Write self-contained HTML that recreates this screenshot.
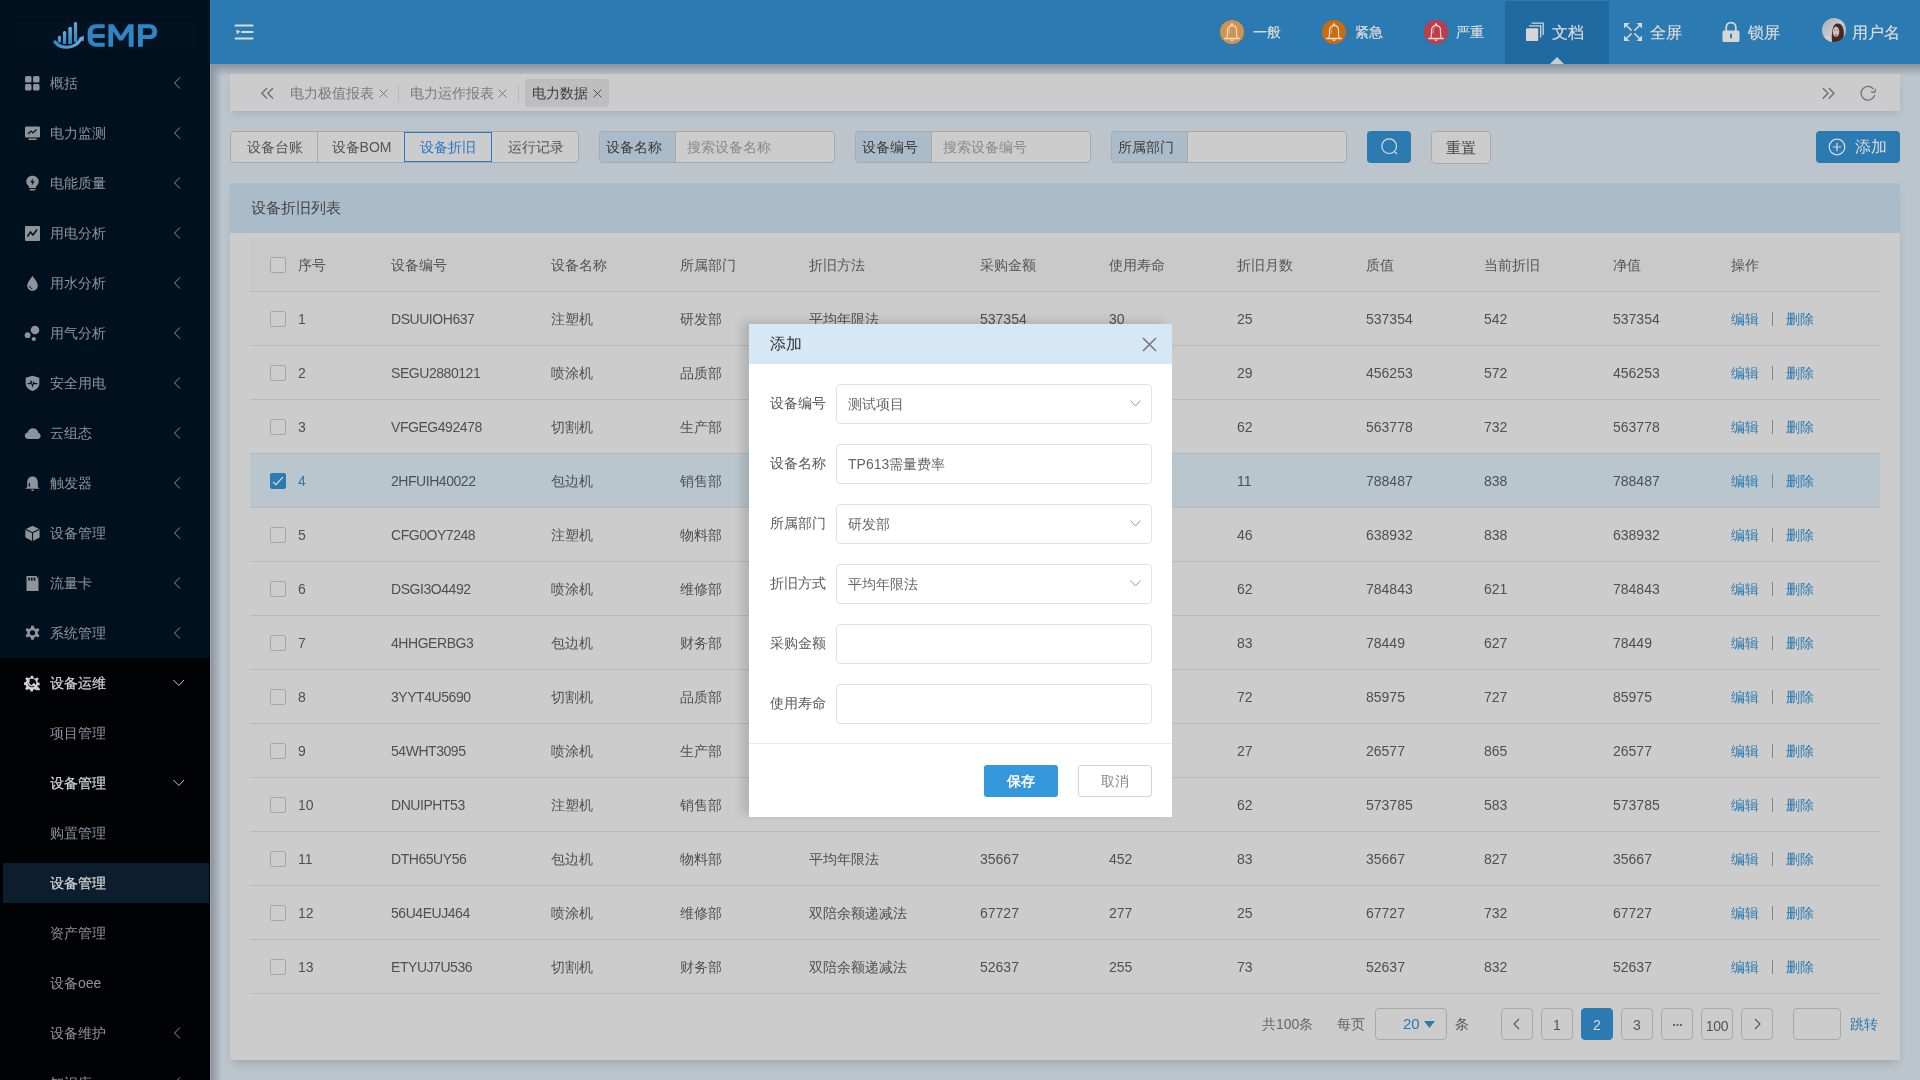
<!DOCTYPE html>
<html><head><meta charset="utf-8"><style>
*{box-sizing:border-box;margin:0;padding:0}
html,body{width:1920px;height:1080px;overflow:hidden}
#root{position:absolute;left:0;top:0;width:1920px;height:1080px;will-change:transform}
body{font-family:"Liberation Sans",sans-serif;font-size:14px;background:#bcc4cc;position:relative;color:#505050}
.a{position:absolute}
#side{position:absolute;left:0;top:0;width:210px;height:1080px;background:#01101f;overflow:hidden}
#side .sub{position:absolute;left:0;top:658px;width:210px;height:422px;background:#010204}
.mi{position:absolute;left:0;width:210px;height:50px;line-height:50px;color:#8f949a;font-size:14px;white-space:nowrap}
.mi .t{position:absolute;left:50px;top:0}
.mi svg.ic{position:absolute;left:24px;top:17px}
.mi svg.ch{position:absolute;left:172px;top:19px}
.mi.w{color:#d2d2d2;-webkit-text-stroke:0.25px #d2d2d2}
#hdr{position:absolute;left:210px;top:0;width:1710px;height:64px;background:#2b7ab2}
#hdrsh{position:absolute;left:210px;top:64px;width:1710px;height:12px;background:linear-gradient(#8a939c,rgba(188,196,204,0))}
#sidesh{position:absolute;left:210px;top:64px;width:14px;height:1016px;background:linear-gradient(90deg,#a4acb4 0,#8e97a0 1.5px,rgba(188,196,204,0) 12px)}
.ht{position:absolute;top:0;height:64px;line-height:66px;color:#dcdcdc;font-size:16px;white-space:nowrap;-webkit-text-stroke:0.2px #dcdcdc}
#tabs{position:absolute;left:230px;top:74px;width:1670px;height:37px;background:#cccccc;box-shadow:0 4px 7px -2px rgba(60,70,85,.18)}
.tb{position:absolute;top:0;height:37px;line-height:39px;color:#7a7a7a;font-size:14px;white-space:nowrap}
.grp{position:absolute;top:131px;height:32px;border:1px solid #a9a9a9;background:#cccccc;border-radius:4px;overflow:hidden}
.gb{position:absolute;top:0;height:30px;line-height:30px;text-align:center;color:#555;font-size:14px;white-space:nowrap}
#panel{position:absolute;left:230px;top:183px;width:1670px;height:877px;background:#cccccc;box-shadow:0 6px 9px -4px rgba(60,70,80,.28);border-radius:2px}
#ph{position:absolute;left:0;top:0;width:1670px;height:50px;background:#aabbc9;line-height:50px;padding-left:21px;font-size:15px;color:#444}
.row{position:absolute;left:250px;width:1630px;height:54px;border-bottom:1px solid #b9b9b9}
.c{position:absolute;top:1px;line-height:53px;color:#505050;white-space:nowrap}
.cb{position:absolute;left:20px;top:19px;width:16px;height:16px;border:1px solid #a6a6a6;border-radius:2px}
.lk{color:#2b7ab2}
.pg{position:absolute;top:1008px;width:32px;height:32px;border:1px solid #a8a8a8;border-radius:4px;text-align:center;line-height:32px;color:#555;font-size:14px}
#modal{position:absolute;left:749px;top:324px;width:423px;height:493px;background:#fff;box-shadow:-7px -3px 9px rgba(0,0,0,.13)}
#mh{position:absolute;left:0;top:0;width:423px;height:40px;background:#d6e8f6;line-height:40px;padding-left:21px;font-size:16px;color:#333}
.fl{position:absolute;left:21px;margin-top:-1px;line-height:40px;color:#5a5a5a;font-size:14px;white-space:nowrap}
.fi{position:absolute;left:87px;width:316px;height:40px;border:1px solid #e3e3e3;border-radius:4px;line-height:38px;padding-left:11px;color:#666;font-size:14px}
.fi svg{position:absolute;left:293px;top:15px}
</style></head><body><div id="root">
<div id="side"><div class="sub"></div><div class="a" style="left:16px;top:21px;width:179px;height:29px;background:#021221"></div>
<svg class="a" style="left:50px;top:18px" width="112" height="34" viewBox="0 0 112 34">
<defs><linearGradient id="lg" x1="0" y1="0" x2="0" y2="1"><stop offset="0" stop-color="#6ea8d4"/><stop offset="1" stop-color="#2f86c4"/></linearGradient>
<linearGradient id="lg2" x1="0" y1="0" x2="1" y2="0"><stop offset="0" stop-color="#3a8bc9"/><stop offset="1" stop-color="#6ea8d4"/></linearGradient></defs>
<path d="M7.9 18.8 Q9.4 16.8 10.9 18.8 V24.5 H7.9Z" fill="url(#lg)"/>
<path d="M12.9 14.1 Q14.55 12.1 16.2 14.1 V26 H12.9Z" fill="url(#lg)"/>
<path d="M18.3 9.8 Q20.1 7.8 21.9 9.8 V26 H18.3Z" fill="url(#lg)"/>
<path d="M23.9 5 Q25.5 3 27.1 5 V24 H23.9Z" fill="url(#lg)"/>
<path d="M5 24 C10 30.5 24 32.5 31 21" fill="none" stroke="url(#lg2)" stroke-width="3.2" stroke-linecap="round"/>
<path d="M28.5 20.2 L34 17.6 L33.6 23.5Z" fill="#6ea8d4"/>
<g fill="#2f86c4" fill-rule="evenodd">
<path d="M54.7 6.3 H46 C41.2 6.3 37.66 9.8 37.66 14.5 V20.5 C37.66 25.2 41.2 28.66 46 28.66 H54.7 V24.8 H46.5 C44.2 24.8 42.7 23.3 42.7 21 V19.9 H54.7 V16 H42.7 V14 C42.7 11.7 44.2 10.2 46.5 10.2 H54.7Z"/>
<path d="M58.4 28.66 V6.3 H63.5 L70.9 17.8 L78.3 6.3 H83.6 V28.66 H78.7 V13.8 L72.6 22.4 H69.2 L63.1 13.8 V28.66Z"/>
<path d="M88 28.66 V6.3 H100 C104.3 6.3 107.2 9.3 107.2 13.7 C107.2 18.1 104.3 21.1 100 21.1 H92.9 V28.66Z M92.9 10.2 V17 H99.5 C101.3 17 102.4 15.6 102.4 13.6 C102.4 11.6 101.3 10.2 99.5 10.2Z"/>
</g></svg>
<div class="mi" style="top:58px"><svg class="ic" width="17" height="17" viewBox="0 0 17 17" fill="#8f949a"><rect x="1" y="1" width="6.5" height="6.5" rx="1.5"/><rect x="9" y="1" width="6.5" height="6.5" rx="1.5"/><rect x="1" y="9" width="6.5" height="6.5" rx="1.5"/><rect x="9" y="9" width="6.5" height="6.5" rx="1.5"/></svg><span class="t">概括</span><svg class="ch" width="10" height="12" viewBox="0 0 10 12"><path d="M8 .5 L2.5 6 L8 11.5" fill="none" stroke="#8f949a" stroke-width="1"/></svg></div>
<div class="mi" style="top:108px"><svg class="ic" width="17" height="17" viewBox="0 0 17 17" fill="#8f949a"><rect x="1" y="1.5" width="15" height="11" rx="1"/><rect x="4.5" y="13.5" width="8" height="1.5"/><path d="M4 9 L7 6 L9 8 L12.5 4.5" fill="none" stroke="#01101f" stroke-width="1.2"/></svg><span class="t">电力监测</span><svg class="ch" width="10" height="12" viewBox="0 0 10 12"><path d="M8 .5 L2.5 6 L8 11.5" fill="none" stroke="#8f949a" stroke-width="1"/></svg></div>
<div class="mi" style="top:158px"><svg class="ic" width="17" height="17" viewBox="0 0 17 17" fill="#8f949a"><path d="M8.5 0.8 C4.8 0.8 2.3 3.5 2.3 6.6 C2.3 9 3.8 10.5 5 11.6 L5 13 L12 13 L12 11.6 C13.2 10.5 14.7 9 14.7 6.6 C14.7 3.5 12.2 0.8 8.5 0.8Z"/><rect x="5.5" y="14" width="6" height="1.6" rx=".8"/><path d="M9.3 3 L6.2 7.4 L8.4 7.4 L7.6 10.8 L10.8 6.2 L8.6 6.2 Z" fill="#01101f"/></svg><span class="t">电能质量</span><svg class="ch" width="10" height="12" viewBox="0 0 10 12"><path d="M8 .5 L2.5 6 L8 11.5" fill="none" stroke="#8f949a" stroke-width="1"/></svg></div>
<div class="mi" style="top:208px"><svg class="ic" width="17" height="17" viewBox="0 0 17 17" fill="#8f949a"><rect x="1" y="1" width="15" height="15" rx="1"/><path d="M3.5 11.5 L6.5 7 L9 10 L13 4.5" fill="none" stroke="#01101f" stroke-width="1.5"/></svg><span class="t">用电分析</span><svg class="ch" width="10" height="12" viewBox="0 0 10 12"><path d="M8 .5 L2.5 6 L8 11.5" fill="none" stroke="#8f949a" stroke-width="1"/></svg></div>
<div class="mi" style="top:258px"><svg class="ic" width="17" height="17" viewBox="0 0 17 17" fill="#8f949a"><path d="M8.5 1 C6 4.5 3.2 7.5 3.2 10.5 C3.2 13.5 5.6 15.8 8.5 15.8 C11.4 15.8 13.8 13.5 13.8 10.5 C13.8 7.5 11 4.5 8.5 1Z"/><path d="M5.7 11 C5.8 12.6 6.8 13.6 8.3 13.8" fill="none" stroke="#01101f" stroke-width="1"/></svg><span class="t">用水分析</span><svg class="ch" width="10" height="12" viewBox="0 0 10 12"><path d="M8 .5 L2.5 6 L8 11.5" fill="none" stroke="#8f949a" stroke-width="1"/></svg></div>
<div class="mi" style="top:308px"><svg class="ic" width="17" height="17" viewBox="0 0 17 17" fill="#8f949a"><circle cx="11" cy="5" r="4.3"/><circle cx="3.6" cy="10.2" r="2.9"/><circle cx="9.8" cy="14" r="2.1"/></svg><span class="t">用气分析</span><svg class="ch" width="10" height="12" viewBox="0 0 10 12"><path d="M8 .5 L2.5 6 L8 11.5" fill="none" stroke="#8f949a" stroke-width="1"/></svg></div>
<div class="mi" style="top:358px"><svg class="ic" width="17" height="17" viewBox="0 0 17 17" fill="#8f949a"><path d="M8.5 0.8 L15.3 2.8 L15.3 8.5 C15.3 12 12.5 14.6 8.5 16 C4.5 14.6 1.7 12 1.7 8.5 L1.7 2.8 Z"/><path d="M3.5 8.6 L6 8.6 L7 6.3 L8.5 11 L9.8 7.3 L10.6 8.6 L13.5 8.6" fill="none" stroke="#01101f" stroke-width="1.1"/></svg><span class="t">安全用电</span><svg class="ch" width="10" height="12" viewBox="0 0 10 12"><path d="M8 .5 L2.5 6 L8 11.5" fill="none" stroke="#8f949a" stroke-width="1"/></svg></div>
<div class="mi" style="top:408px"><svg class="ic" width="17" height="17" viewBox="0 0 17 17" fill="#8f949a"><path d="M4.5 14 C2.3 14 0.8 12.6 0.8 10.8 C0.8 9.1 2 7.8 3.7 7.6 C4.2 5 6.3 3.2 9 3.2 C11.8 3.2 14 5.2 14.3 7.8 C15.8 8.2 16.6 9.4 16.6 10.9 C16.6 12.7 15.2 14 13.3 14Z"/></svg><span class="t">云组态</span><svg class="ch" width="10" height="12" viewBox="0 0 10 12"><path d="M8 .5 L2.5 6 L8 11.5" fill="none" stroke="#8f949a" stroke-width="1"/></svg></div>
<div class="mi" style="top:458px"><svg class="ic" width="17" height="17" viewBox="0 0 17 17" fill="#8f949a"><path d="M8.5 1.5 C5 1.5 3.2 4.2 3.2 7.5 L3.2 12 L1.3 13.8 L15.7 13.8 L13.8 12 L13.8 7.5 C13.8 4.2 12 1.5 8.5 1.5Z"/><rect x="7.2" y="14.4" width="2.6" height="1.6" rx=".8"/><rect x="4.8" y="8" width="1.2" height="3.6" fill="#01101f"/></svg><span class="t">触发器</span><svg class="ch" width="10" height="12" viewBox="0 0 10 12"><path d="M8 .5 L2.5 6 L8 11.5" fill="none" stroke="#8f949a" stroke-width="1"/></svg></div>
<div class="mi" style="top:508px"><svg class="ic" width="17" height="17" viewBox="0 0 17 17" fill="#8f949a"><path d="M8.5 0.8 L15.6 4.2 L15.6 12.6 L8.5 16.2 L1.4 12.6 L1.4 4.2 Z"/><path d="M1.8 4.4 L8.5 7.7 L15.2 4.4 M8.5 7.7 L8.5 16" fill="none" stroke="#01101f" stroke-width="1.1"/></svg><span class="t">设备管理</span><svg class="ch" width="10" height="12" viewBox="0 0 10 12"><path d="M8 .5 L2.5 6 L8 11.5" fill="none" stroke="#8f949a" stroke-width="1"/></svg></div>
<div class="mi" style="top:558px"><svg class="ic" width="17" height="17" viewBox="0 0 17 17" fill="#8f949a"><path d="M2.5 1 L14.5 1 L14.5 16 L2.5 16 Z"/><rect x="4.3" y="2.6" width="1.6" height="3" fill="#01101f"/><rect x="7" y="2.6" width="1.6" height="3" fill="#01101f"/><rect x="9.7" y="2.6" width="1.6" height="3" fill="#01101f"/><path d="M12.5 1 L14.5 1 L14.5 4.5 Z" fill="#01101f"/></svg><span class="t">流量卡</span><svg class="ch" width="10" height="12" viewBox="0 0 10 12"><path d="M8 .5 L2.5 6 L8 11.5" fill="none" stroke="#8f949a" stroke-width="1"/></svg></div>
<div class="mi" style="top:608px"><svg class="ic" width="17" height="17" viewBox="0 0 17 17" fill="#8f949a"><path d="M7.2 0.8 L9.8 0.8 L10.3 3 L12 3.9 L14.1 3 L15.5 5.2 L13.8 6.8 L13.8 8.7 L15.5 10.3 L14.1 12.5 L12 11.6 L10.3 12.5 L9.8 14.7 L7.2 14.7 L6.7 12.5 L5 11.6 L2.9 12.5 L1.5 10.3 L3.2 8.7 L3.2 6.8 L1.5 5.2 L2.9 3 L5 3.9 L6.7 3Z"/><circle cx="8.5" cy="7.75" r="2.6" fill="#01101f"/></svg><span class="t">系统管理</span><svg class="ch" width="10" height="12" viewBox="0 0 10 12"><path d="M8 .5 L2.5 6 L8 11.5" fill="none" stroke="#8f949a" stroke-width="1"/></svg></div>
<div class="mi w" style="top:658px"><svg class="ic" width="17" height="17" viewBox="0 0 17 17" fill="#d2d2d2"><g transform="translate(8 8)"><path d="M-1.3 -8 H1.3 L1.7 -5.6 L3.6 -4.8 L5.6 -6.3 L7.4 -4.5 L5.9 -2.5 L6.6 -0.6 L8.5 -0.2 V2.4 L6.3 2.8 L5.5 4.7 L6.9 6.6 L5 8.4 L3.1 7 L1.2 7.7 L.9 9.5 H-1.7 L-2 7.4 L-3.9 6.6 L-5.8 8 L-7.6 6.2 L-6.2 4.3 L-7 2.4 L-9 2 V-.6 L-6.9 -1 L-6.1 -2.9 L-7.5 -4.8 L-5.6 -6.6 L-3.7 -5.2 L-1.8 -6Z" transform="scale(.9)"/><circle r="4.3" fill="#010204"/><path d="M-2.6 -2.9 A3.2 3.2 0 1 0 2.2 1.6" fill="none" stroke="#d2d2d2" stroke-width="1.5"/><path d="M1 .5 L7.5 7" stroke="#d2d2d2" stroke-width="2.2"/></g></svg><span class="t">设备运维</span><svg class="ch" width="14" height="12" viewBox="0 0 14 12" style="left:172px"><path d="M1.5 3 L6.8 8.5 L12 3" fill="none" stroke="#c8c8c8" stroke-width="1"/></svg></div>
<div class="a" style="left:3px;top:863px;width:206px;height:40px;background:#0c1e2d"></div>
<div class="mi" style="top:708px"><span class="t">项目管理</span></div>
<div class="mi w" style="top:758px"><span class="t">设备管理</span><svg class="ch" width="14" height="12" viewBox="0 0 14 12" style="left:172px"><path d="M1.5 3 L6.8 8.5 L12 3" fill="none" stroke="#c8c8c8" stroke-width="1"/></svg></div>
<div class="mi" style="top:808px"><span class="t">购置管理</span></div>
<div class="mi w" style="top:858px"><span class="t">设备管理</span></div>
<div class="mi" style="top:908px"><span class="t">资产管理</span></div>
<div class="mi" style="top:958px"><span class="t">设备oee</span></div>
<div class="mi" style="top:1008px"><span class="t">设备维护</span><svg class="ch" width="10" height="12" viewBox="0 0 10 12"><path d="M8 .5 L2.5 6 L8 11.5" fill="none" stroke="#8f949a" stroke-width="1"/></svg></div>
<div class="mi" style="top:1058px"><span class="t">知识库</span><svg class="ch" width="10" height="12" viewBox="0 0 10 12"><path d="M8 .5 L2.5 6 L8 11.5" fill="none" stroke="#8f949a" stroke-width="1"/></svg></div>
</div>
<div id="hdr"></div>
<div class="a" style="left:1505px;top:1px;width:104px;height:63px;background:#1f6aa1"></div>
<svg class="a" style="left:1550px;top:57px" width="14" height="7" viewBox="0 0 14 7"><path d="M0 7 L7 0 L14 7Z" fill="#c8cdd2"/></svg>
<div id="hdrsh"></div><div id="sidesh"></div>
<svg class="a" style="left:234px;top:23px" width="20" height="18" viewBox="0 0 20 18">
<path d="M1.5 2.5 H18.5 M8 9 H18.5 M1.5 15.5 H18.5" stroke="#dcdad6" stroke-width="2" stroke-linecap="round"/>
<path d="M2 6.8 L6.4 8.2 L3 11.5 Z" fill="#dcdad6"/></svg>
<svg class="a" style="left:1220px;top:20px" width="24" height="24" viewBox="0 0 24 24"><circle cx="12" cy="12" r="12" fill="#d4924a"/><path d="M6.6 17.9 C7.4 16.5 7.5 15.5 7.5 13.5 V10.2 C7.5 7.3 9.3 5.6 12 5.6 C14.7 5.6 16.5 7.3 16.5 10.2 V13.5 C16.5 15.5 16.6 16.5 17.4 17.9" fill="none" stroke="#e2dfdc" stroke-width="1.2"/><path d="M4.6 18.4 H19.4" stroke="#e2dfdc" stroke-width="1.5" stroke-linecap="round"/><circle cx="12" cy="4.4" r="1.2" fill="#e2dfdc"/><path d="M10.6 19.3 A1.45 1.45 0 0 0 13.4 19.3" fill="none" stroke="#e2dfdc" stroke-width="1.1"/><path d="M9.2 13.5 V10.5 C9.2 9.2 9.6 8.4 10.6 7.7" fill="none" stroke="#e2dfdc" stroke-width=".7"/></svg><div class="ht" style="left:1253px;font-size:14px;line-height:65px">一般</div>
<svg class="a" style="left:1322px;top:20px" width="24" height="24" viewBox="0 0 24 24"><circle cx="12" cy="12" r="12" fill="#cc6a0c"/><path d="M6.6 17.9 C7.4 16.5 7.5 15.5 7.5 13.5 V10.2 C7.5 7.3 9.3 5.6 12 5.6 C14.7 5.6 16.5 7.3 16.5 10.2 V13.5 C16.5 15.5 16.6 16.5 17.4 17.9" fill="none" stroke="#e2dfdc" stroke-width="1.2"/><path d="M4.6 18.4 H19.4" stroke="#e2dfdc" stroke-width="1.5" stroke-linecap="round"/><circle cx="12" cy="4.4" r="1.2" fill="#e2dfdc"/><path d="M10.6 19.3 A1.45 1.45 0 0 0 13.4 19.3" fill="none" stroke="#e2dfdc" stroke-width="1.1"/><path d="M9.2 13.5 V10.5 C9.2 9.2 9.6 8.4 10.6 7.7" fill="none" stroke="#e2dfdc" stroke-width=".7"/></svg><div class="ht" style="left:1355px;font-size:14px;line-height:65px">紧急</div>
<svg class="a" style="left:1424px;top:20px" width="24" height="24" viewBox="0 0 24 24"><circle cx="12" cy="12" r="12" fill="#c33a48"/><path d="M6.6 17.9 C7.4 16.5 7.5 15.5 7.5 13.5 V10.2 C7.5 7.3 9.3 5.6 12 5.6 C14.7 5.6 16.5 7.3 16.5 10.2 V13.5 C16.5 15.5 16.6 16.5 17.4 17.9" fill="none" stroke="#e2dfdc" stroke-width="1.2"/><path d="M4.6 18.4 H19.4" stroke="#e2dfdc" stroke-width="1.5" stroke-linecap="round"/><circle cx="12" cy="4.4" r="1.2" fill="#e2dfdc"/><path d="M10.6 19.3 A1.45 1.45 0 0 0 13.4 19.3" fill="none" stroke="#e2dfdc" stroke-width="1.1"/><path d="M9.2 13.5 V10.5 C9.2 9.2 9.6 8.4 10.6 7.7" fill="none" stroke="#e2dfdc" stroke-width=".7"/></svg><div class="ht" style="left:1456px;font-size:14px;line-height:65px">严重</div>
<svg class="a" style="left:1525px;top:22px" width="20" height="20" viewBox="0 0 20 20">
<path d="M6.5 1.2 H18.2 V13" fill="none" stroke="#d6d6d6" stroke-width="1.3"/>
<path d="M4 3.8 H15.7 V15.5" fill="none" stroke="#d6d6d6" stroke-width="1.3"/>
<rect x="1" y="6.3" width="12.2" height="12.7" rx="1" fill="#d6d6d6"/></svg>
<div class="ht" style="left:1552px">文档</div>
<svg class="a" style="left:1623px;top:22px" width="20" height="20" viewBox="0 0 20 20" fill="#d6d6d6">
<path d="M8.6 8.6 L3.2 3.2 M11.4 8.6 L16.8 3.2 M8.6 11.4 L3.2 16.8 M11.4 11.4 L16.8 16.8" stroke="#d6d6d6" stroke-width="1.5"/>
<path d="M1 1 H6.5 L1 6.5Z"/><path d="M19 1 V6.5 L13.5 1Z"/><path d="M1 19 V13.5 L6.5 19Z"/><path d="M19 19 H13.5 L19 13.5Z"/></svg>
<div class="ht" style="left:1650px">全屏</div>
<svg class="a" style="left:1721px;top:21px" width="20" height="22" viewBox="0 0 20 22">
<path d="M5.2 10 V6.5 C5.2 3.6 7.3 1.6 10 1.6 C12.7 1.6 14.8 3.6 14.8 6.5 V10" fill="none" stroke="#d6d6d6" stroke-width="1.8"/>
<rect x="1.5" y="9.5" width="17" height="11.5" rx="1.5" fill="#d6d6d6"/><rect x="9" y="12.5" width="2" height="5" rx="1" fill="#2b7ab2"/></svg>
<div class="ht" style="left:1748px">锁屏</div>
<svg class="a" style="left:1822px;top:18px" width="24" height="24" viewBox="0 0 24 24">
<defs><clipPath id="avc"><circle cx="12" cy="12" r="12"/></clipPath><linearGradient id="avg" x1="0" y1="0" x2="1" y2="1"><stop offset="0" stop-color="#a9aab0"/><stop offset=".5" stop-color="#c9c9cc"/><stop offset="1" stop-color="#b0acaa"/></linearGradient></defs>
<g clip-path="url(#avc)"><rect width="24" height="24" fill="url(#avg)"/>
<path d="M0 19 C4 17 8 18 12 20 L12 24 L0 24Z" fill="#d6d0c8"/>
<path d="M10 24 C9.6 18 9.8 10 12.2 7.2 C14.2 4.8 18 4.8 20 7.8 C22.4 11.5 22.2 18 21 21.5 L17 24Z" fill="#3e2a26"/>
<ellipse cx="14" cy="13.6" rx="3.3" ry="5.2" fill="#d5bcb8"/>
<ellipse cx="14" cy="17" rx="1.1" ry=".65" fill="#c8283c"/>
<ellipse cx="12.6" cy="12" rx=".7" ry=".4" fill="#4a4a5a"/><ellipse cx="15.5" cy="12" rx=".7" ry=".4" fill="#4a4a5a"/>
</g></svg>
<div class="ht" style="left:1852px">用户名</div>
<div id="tabs"></div>
<svg class="a" style="left:260px;top:86px" width="15" height="14" viewBox="0 0 15 14"><path d="M7 2 L1.8 7.3 L7 12.6 M13 2 L7.8 7.3 L13 12.6" fill="none" stroke="#707070" stroke-width="1.4"/></svg>
<div class="tb" style="left:290px;top:74px">电力极值报表</div><svg class="a" style="left:379px;top:89px" width="9" height="9" viewBox="0 0 9 9"><path d="M.6 .6 L8.4 8.4 M8.4 .6 L.6 8.4" stroke="#7a7a7a" stroke-width="1"/></svg>
<div class="a" style="left:398px;top:84px;width:1px;height:18px;background:#b8b8b8"></div>
<div class="tb" style="left:410px;top:74px">电力运作报表</div><svg class="a" style="left:498px;top:89px" width="9" height="9" viewBox="0 0 9 9"><path d="M.6 .6 L8.4 8.4 M8.4 .6 L.6 8.4" stroke="#7a7a7a" stroke-width="1"/></svg>
<div class="a" style="left:518px;top:84px;width:1px;height:18px;background:#b8b8b8"></div>
<div class="a" style="left:525px;top:79px;width:84px;height:28px;background:#bebebe;border-radius:3px"></div>
<div class="tb" style="left:532px;top:74px;color:#3c3c3c">电力数据</div><svg class="a" style="left:593px;top:89px" width="9" height="9" viewBox="0 0 9 9"><path d="M.6 .6 L8.4 8.4 M8.4 .6 L.6 8.4" stroke="#505050" stroke-width="1"/></svg>
<svg class="a" style="left:1821px;top:86px" width="15" height="14" viewBox="0 0 15 14"><path d="M1.8 2 L7 7.3 L1.8 12.6 M7.8 2 L13 7.3 L7.8 12.6" fill="none" stroke="#707070" stroke-width="1.4"/></svg>
<svg class="a" style="left:1860px;top:85px" width="17" height="17" viewBox="0 0 17 17"><path d="M14.7 10 A6.9 6.9 0 1 1 13.6 4.2" fill="none" stroke="#707070" stroke-width="1.2"/><path d="M11 6.6 L14.6 7.6 L15.6 4" fill="none" stroke="#707070" stroke-width="1.2"/></svg>
<div class="grp" style="left:230px;width:349px"><div class="gb" style="left:0;width:87px">设备台账</div><div class="a" style="left:86px;top:0;width:1px;height:30px;background:#a9a9a9"></div><div class="gb" style="left:87px;width:87px">设备BOM</div><div class="gb" style="left:173px;width:88px;border:1px solid #2a78c8;height:30px;line-height:28px;color:#2a78c8;background:#cccccc">设备折旧</div><div class="gb" style="left:261px;width:87px">运行记录</div></div>
<div class="grp" style="left:599px;width:236px"><div class="a" style="left:0;top:0;width:76px;height:30px;background:#aabbc9;border-right:1px solid #a9a9a9"></div><div class="gb" style="left:6px;color:#3c3c3c">设备名称</div><div class="gb" style="left:87px;color:#8a8a8a">搜索设备名称</div></div>
<div class="grp" style="left:855px;width:236px"><div class="a" style="left:0;top:0;width:76px;height:30px;background:#aabbc9;border-right:1px solid #a9a9a9"></div><div class="gb" style="left:6px;color:#3c3c3c">设备编号</div><div class="gb" style="left:87px;color:#8a8a8a">搜索设备编号</div></div>
<div class="grp" style="left:1111px;width:236px"><div class="a" style="left:0;top:0;width:76px;height:30px;background:#aabbc9;border-right:1px solid #a9a9a9"></div><div class="gb" style="left:6px;color:#3c3c3c">所属部门</div><div class="gb" style="left:87px;color:#8a8a8a"></div></div>
<div class="a" style="left:1367px;top:131px;width:44px;height:32px;background:#2b7ab2;border-radius:4px"></div><svg class="a" style="left:1380px;top:137px" width="19" height="19" viewBox="0 0 19 19"><circle cx="9.2" cy="9.2" r="7.3" fill="none" stroke="#dcdcdc" stroke-width="1.2"/><path d="M14.6 14.6 L17 17" stroke="#dcdcdc" stroke-width="1.3"/></svg>
<div class="grp" style="left:1431px;width:60px;height:33px"><div class="gb" style="left:0;width:58px;color:#444;font-size:15px;line-height:32px">重置</div></div>
<div class="a" style="left:1816px;top:131px;width:84px;height:32px;background:#2b7ab2;border-radius:4px"></div><svg class="a" style="left:1828px;top:138px" width="18" height="18" viewBox="0 0 18 18"><circle cx="9" cy="9" r="7.8" fill="none" stroke="#dcdcdc" stroke-width="1.2"/><path d="M9 4.8 V13.2 M4.8 9 H13.2" stroke="#dcdcdc" stroke-width="1.2"/></svg><div class="a" style="left:1855px;top:131px;line-height:32px;font-size:16px;color:#dcdcdc">添加</div>
<div id="panel"><div id="ph">设备折旧列表</div></div>
<div class="row" style="top:238px;height:54px;background:#c9c9c9;border-radius:4px 4px 0 0"><div class="cb" style="background:#cdcdcd"></div><div class="c" style="left:48px;color:#555">序号</div><div class="c" style="left:141px;color:#555">设备编号</div><div class="c" style="left:301px;color:#555">设备名称</div><div class="c" style="left:430px;color:#555">所属部门</div><div class="c" style="left:559px;color:#555">折旧方法</div><div class="c" style="left:730px;color:#555">采购金额</div><div class="c" style="left:859px;color:#555">使用寿命</div><div class="c" style="left:987px;color:#555">折旧月数</div><div class="c" style="left:1116px;color:#555">质值</div><div class="c" style="left:1234px;color:#555">当前折旧</div><div class="c" style="left:1363px;color:#555">净值</div><div class="c" style="left:1481px;color:#555">操作</div></div>
<div class="row" style="top:292px;"><div class="cb" style="background:#cdcdcd"></div><div class="c" style="left:48px">1</div><div class="c" style="left:141px;letter-spacing:-0.45px">DSUUIOH637</div><div class="c" style="left:301px">注塑机</div><div class="c" style="left:430px">研发部</div><div class="c" style="left:559px">平均年限法</div><div class="c" style="left:730px">537354</div><div class="c" style="left:859px">30</div><div class="c" style="left:987px">25</div><div class="c" style="left:1116px">537354</div><div class="c" style="left:1234px">542</div><div class="c" style="left:1363px">537354</div><div class="c lk" style="left:1481px">编辑</div><div class="a" style="left:1522px;top:20px;width:1px;height:14px;background:#858585"></div><div class="c lk" style="left:1536px">删除</div></div>
<div class="row" style="top:346px;"><div class="cb" style="background:#cdcdcd"></div><div class="c" style="left:48px">2</div><div class="c" style="left:141px;letter-spacing:-0.45px">SEGU2880121</div><div class="c" style="left:301px">喷涂机</div><div class="c" style="left:430px">品质部</div><div class="c" style="left:559px">平均年限法</div><div class="c" style="left:730px">456253</div><div class="c" style="left:859px">30</div><div class="c" style="left:987px">29</div><div class="c" style="left:1116px">456253</div><div class="c" style="left:1234px">572</div><div class="c" style="left:1363px">456253</div><div class="c lk" style="left:1481px">编辑</div><div class="a" style="left:1522px;top:20px;width:1px;height:14px;background:#858585"></div><div class="c lk" style="left:1536px">删除</div></div>
<div class="row" style="top:400px;"><div class="cb" style="background:#cdcdcd"></div><div class="c" style="left:48px">3</div><div class="c" style="left:141px;letter-spacing:-0.45px">VFGEG492478</div><div class="c" style="left:301px">切割机</div><div class="c" style="left:430px">生产部</div><div class="c" style="left:559px">平均年限法</div><div class="c" style="left:730px">563778</div><div class="c" style="left:859px">30</div><div class="c" style="left:987px">62</div><div class="c" style="left:1116px">563778</div><div class="c" style="left:1234px">732</div><div class="c" style="left:1363px">563778</div><div class="c lk" style="left:1481px">编辑</div><div class="a" style="left:1522px;top:20px;width:1px;height:14px;background:#858585"></div><div class="c lk" style="left:1536px">删除</div></div>
<div class="row" style="top:454px;background:#b9c6ce;"><div class="cb" style="background:#2b7ab2;border-color:#2b7ab2"><svg width="14" height="14" viewBox="0 0 14 14" style="position:absolute;left:0;top:0"><path d="M1.9 7.9 L4.9 10.7 L11.8 3.2" fill="none" stroke="#e0e0e0" stroke-width="1.2"/></svg></div><div class="c" style="left:48px;color:#2b7ab2">4</div><div class="c" style="left:141px;letter-spacing:-0.45px">2HFUIH40022</div><div class="c" style="left:301px">包边机</div><div class="c" style="left:430px">销售部</div><div class="c" style="left:559px">平均年限法</div><div class="c" style="left:730px">788487</div><div class="c" style="left:859px">30</div><div class="c" style="left:987px">11</div><div class="c" style="left:1116px">788487</div><div class="c" style="left:1234px">838</div><div class="c" style="left:1363px">788487</div><div class="c lk" style="left:1481px">编辑</div><div class="a" style="left:1522px;top:20px;width:1px;height:14px;background:#858585"></div><div class="c lk" style="left:1536px">删除</div></div>
<div class="row" style="top:508px;"><div class="cb" style="background:#cdcdcd"></div><div class="c" style="left:48px">5</div><div class="c" style="left:141px;letter-spacing:-0.45px">CFG0OY7248</div><div class="c" style="left:301px">注塑机</div><div class="c" style="left:430px">物料部</div><div class="c" style="left:559px">平均年限法</div><div class="c" style="left:730px">638932</div><div class="c" style="left:859px">30</div><div class="c" style="left:987px">46</div><div class="c" style="left:1116px">638932</div><div class="c" style="left:1234px">838</div><div class="c" style="left:1363px">638932</div><div class="c lk" style="left:1481px">编辑</div><div class="a" style="left:1522px;top:20px;width:1px;height:14px;background:#858585"></div><div class="c lk" style="left:1536px">删除</div></div>
<div class="row" style="top:562px;"><div class="cb" style="background:#cdcdcd"></div><div class="c" style="left:48px">6</div><div class="c" style="left:141px;letter-spacing:-0.45px">DSGI3O4492</div><div class="c" style="left:301px">喷涂机</div><div class="c" style="left:430px">维修部</div><div class="c" style="left:559px">平均年限法</div><div class="c" style="left:730px">784843</div><div class="c" style="left:859px">30</div><div class="c" style="left:987px">62</div><div class="c" style="left:1116px">784843</div><div class="c" style="left:1234px">621</div><div class="c" style="left:1363px">784843</div><div class="c lk" style="left:1481px">编辑</div><div class="a" style="left:1522px;top:20px;width:1px;height:14px;background:#858585"></div><div class="c lk" style="left:1536px">删除</div></div>
<div class="row" style="top:616px;"><div class="cb" style="background:#cdcdcd"></div><div class="c" style="left:48px">7</div><div class="c" style="left:141px;letter-spacing:-0.45px">4HHGERBG3</div><div class="c" style="left:301px">包边机</div><div class="c" style="left:430px">财务部</div><div class="c" style="left:559px">平均年限法</div><div class="c" style="left:730px">78449</div><div class="c" style="left:859px">30</div><div class="c" style="left:987px">83</div><div class="c" style="left:1116px">78449</div><div class="c" style="left:1234px">627</div><div class="c" style="left:1363px">78449</div><div class="c lk" style="left:1481px">编辑</div><div class="a" style="left:1522px;top:20px;width:1px;height:14px;background:#858585"></div><div class="c lk" style="left:1536px">删除</div></div>
<div class="row" style="top:670px;"><div class="cb" style="background:#cdcdcd"></div><div class="c" style="left:48px">8</div><div class="c" style="left:141px;letter-spacing:-0.45px">3YYT4U5690</div><div class="c" style="left:301px">切割机</div><div class="c" style="left:430px">品质部</div><div class="c" style="left:559px">平均年限法</div><div class="c" style="left:730px">85975</div><div class="c" style="left:859px">30</div><div class="c" style="left:987px">72</div><div class="c" style="left:1116px">85975</div><div class="c" style="left:1234px">727</div><div class="c" style="left:1363px">85975</div><div class="c lk" style="left:1481px">编辑</div><div class="a" style="left:1522px;top:20px;width:1px;height:14px;background:#858585"></div><div class="c lk" style="left:1536px">删除</div></div>
<div class="row" style="top:724px;"><div class="cb" style="background:#cdcdcd"></div><div class="c" style="left:48px">9</div><div class="c" style="left:141px;letter-spacing:-0.45px">54WHT3095</div><div class="c" style="left:301px">喷涂机</div><div class="c" style="left:430px">生产部</div><div class="c" style="left:559px">平均年限法</div><div class="c" style="left:730px">26577</div><div class="c" style="left:859px">30</div><div class="c" style="left:987px">27</div><div class="c" style="left:1116px">26577</div><div class="c" style="left:1234px">865</div><div class="c" style="left:1363px">26577</div><div class="c lk" style="left:1481px">编辑</div><div class="a" style="left:1522px;top:20px;width:1px;height:14px;background:#858585"></div><div class="c lk" style="left:1536px">删除</div></div>
<div class="row" style="top:778px;"><div class="cb" style="background:#cdcdcd"></div><div class="c" style="left:48px">10</div><div class="c" style="left:141px;letter-spacing:-0.45px">DNUIPHT53</div><div class="c" style="left:301px">注塑机</div><div class="c" style="left:430px">销售部</div><div class="c" style="left:559px">平均年限法</div><div class="c" style="left:730px">573785</div><div class="c" style="left:859px">30</div><div class="c" style="left:987px">62</div><div class="c" style="left:1116px">573785</div><div class="c" style="left:1234px">583</div><div class="c" style="left:1363px">573785</div><div class="c lk" style="left:1481px">编辑</div><div class="a" style="left:1522px;top:20px;width:1px;height:14px;background:#858585"></div><div class="c lk" style="left:1536px">删除</div></div>
<div class="row" style="top:832px;"><div class="cb" style="background:#cdcdcd"></div><div class="c" style="left:48px">11</div><div class="c" style="left:141px;letter-spacing:-0.45px">DTH65UY56</div><div class="c" style="left:301px">包边机</div><div class="c" style="left:430px">物料部</div><div class="c" style="left:559px">平均年限法</div><div class="c" style="left:730px">35667</div><div class="c" style="left:859px">452</div><div class="c" style="left:987px">83</div><div class="c" style="left:1116px">35667</div><div class="c" style="left:1234px">827</div><div class="c" style="left:1363px">35667</div><div class="c lk" style="left:1481px">编辑</div><div class="a" style="left:1522px;top:20px;width:1px;height:14px;background:#858585"></div><div class="c lk" style="left:1536px">删除</div></div>
<div class="row" style="top:886px;"><div class="cb" style="background:#cdcdcd"></div><div class="c" style="left:48px">12</div><div class="c" style="left:141px;letter-spacing:-0.45px">56U4EUJ464</div><div class="c" style="left:301px">喷涂机</div><div class="c" style="left:430px">维修部</div><div class="c" style="left:559px">双陪余额递减法</div><div class="c" style="left:730px">67727</div><div class="c" style="left:859px">277</div><div class="c" style="left:987px">25</div><div class="c" style="left:1116px">67727</div><div class="c" style="left:1234px">732</div><div class="c" style="left:1363px">67727</div><div class="c lk" style="left:1481px">编辑</div><div class="a" style="left:1522px;top:20px;width:1px;height:14px;background:#858585"></div><div class="c lk" style="left:1536px">删除</div></div>
<div class="row" style="top:940px;"><div class="cb" style="background:#cdcdcd"></div><div class="c" style="left:48px">13</div><div class="c" style="left:141px;letter-spacing:-0.45px">ETYUJ7U536</div><div class="c" style="left:301px">切割机</div><div class="c" style="left:430px">财务部</div><div class="c" style="left:559px">双陪余额递减法</div><div class="c" style="left:730px">52637</div><div class="c" style="left:859px">255</div><div class="c" style="left:987px">73</div><div class="c" style="left:1116px">52637</div><div class="c" style="left:1234px">832</div><div class="c" style="left:1363px">52637</div><div class="c lk" style="left:1481px">编辑</div><div class="a" style="left:1522px;top:20px;width:1px;height:14px;background:#858585"></div><div class="c lk" style="left:1536px">删除</div></div>
<div class="a" style="left:1262px;top:1008px;line-height:32px;color:#666">共100条</div>
<div class="a" style="left:1337px;top:1008px;line-height:32px;color:#666">每页</div>
<div class="pg" style="left:1375px;width:72px"></div><div class="a" style="left:1403px;top:1008px;line-height:32px;color:#2b7ab2;font-size:15px">20</div><svg class="a" style="left:1424px;top:1021px" width="11" height="7" viewBox="0 0 11 7"><path d="M0 0 H11 L5.5 7Z" fill="#2b7ab2"/></svg>
<div class="a" style="left:1455px;top:1008px;line-height:32px;color:#555">条</div>
<div class="pg" style="left:1501px"><svg width="10" height="12" viewBox="0 0 10 12" style="margin-top:9px"><path d="M7 1 L2 6 L7 11" fill="none" stroke="#555" stroke-width="1.1"/></svg></div><div class="pg" style="left:1541px">1</div><div class="pg" style="left:1581px;background:#2b7ab2;border-color:#2b7ab2;color:#dcdcdc">2</div><div class="pg" style="left:1621px;line-height:33px">3</div><div class="pg" style="left:1661px"><svg class="a" style="left:11px;top:15px" width="9" height="2" viewBox="0 0 9 2" fill="#666"><rect x="0" y="0" width="2" height="2"/><rect x="3.5" y="0" width="2" height="2"/><rect x="7" y="0" width="2" height="2"/></svg></div><div class="pg" style="left:1701px;line-height:34px;letter-spacing:-0.3px">100</div><div class="pg" style="left:1741px"><svg width="10" height="12" viewBox="0 0 10 12" style="margin-top:9px"><path d="M3 1 L8 6 L3 11" fill="none" stroke="#555" stroke-width="1.1"/></svg></div>
<div class="pg" style="left:1793px;width:48px"></div><div class="a" style="left:1850px;top:1008px;line-height:32px;color:#2b7ab2">跳转</div>
<div id="modal"><div id="mh">添加</div><svg class="a" style="left:393px;top:13px" width="15" height="15" viewBox="0 0 15 15"><path d="M1 1 L14 14 M14 1 L1 14" stroke="#7c7c7c" stroke-width="1.7"/></svg><div class="fl" style="top:60px">设备编号</div><div class="fi" style="top:60px">测试项目<svg width="11" height="7" viewBox="0 0 11 7"><path d="M.5 .5 L5.5 6 L10.5 .5" fill="none" stroke="#999" stroke-width="1"/></svg></div><div class="fl" style="top:120px">设备名称</div><div class="fi" style="top:120px">TP613需量费率</div><div class="fl" style="top:180px">所属部门</div><div class="fi" style="top:180px">研发部<svg width="11" height="7" viewBox="0 0 11 7"><path d="M.5 .5 L5.5 6 L10.5 .5" fill="none" stroke="#999" stroke-width="1"/></svg></div><div class="fl" style="top:240px">折旧方式</div><div class="fi" style="top:240px">平均年限法<svg width="11" height="7" viewBox="0 0 11 7"><path d="M.5 .5 L5.5 6 L10.5 .5" fill="none" stroke="#999" stroke-width="1"/></svg></div><div class="fl" style="top:300px">采购金额</div><div class="fi" style="top:300px"></div><div class="fl" style="top:360px">使用寿命</div><div class="fi" style="top:360px"></div><div class="a" style="left:0;top:419px;width:423px;height:1px;background:#e8e8e8"></div><div class="a" style="left:235px;top:441px;width:74px;height:32px;background:#3598dc;border-radius:3px;color:#fff;text-align:center;line-height:32px;font-size:14px;font-weight:bold">保存</div><div class="a" style="left:329px;top:441px;width:74px;height:32px;border:1px solid #d5d5d5;border-radius:3px;color:#888;text-align:center;line-height:30px;font-size:14px">取消</div></div>
</div></body></html>
